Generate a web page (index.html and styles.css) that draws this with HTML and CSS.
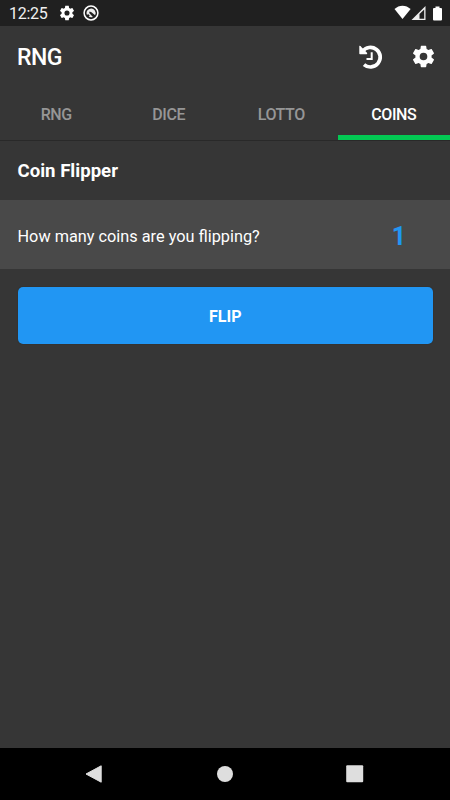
FILE: index.html
```html
<!DOCTYPE html>
<html lang="en">
<head>
<meta charset="utf-8">
<title>RNG</title>
<link rel="stylesheet" href="styles.css">
</head>
<body>
<svg class="defs" width="0" height="0" aria-hidden="true">
  <symbol id="gear" viewBox="0 0 24 24"><path fill="#fff" d="M19.14 12.94c.04-.3.06-.61.06-.94 0-.32-.02-.64-.07-.94l2.03-1.58c.18-.14.23-.41.12-.61l-1.92-3.32c-.12-.22-.37-.29-.59-.22l-2.39.96c-.5-.38-1.03-.7-1.62-.94l-.36-2.54c-.04-.24-.24-.41-.48-.41h-3.84c-.24 0-.43.17-.47.41l-.36 2.54c-.59.24-1.13.57-1.62.94l-2.39-.96c-.22-.08-.47 0-.59.22L2.74 8.87c-.12.21-.08.47.12.61l2.03 1.58c-.05.3-.09.63-.09.94s.02.64.07.94l-2.03 1.58c-.18.14-.23.41-.12.61l1.92 3.32c.12.22.37.29.59.22l2.39-.96c.5.38 1.03.7 1.62.94l.36 2.54c.05.24.24.41.48.41h3.84c.24 0 .44-.17.47-.41l.36-2.54c.59-.24 1.13-.56 1.62-.94l2.39.96c.22.08.47 0 .59-.22l1.92-3.32c.12-.22.07-.47-.12-.61l-2.01-1.58zM12 15.4A3.4 3.4 0 1 1 12 8.600a3.400 3.400 0 0 1 0 6.800z"/></symbol>
</svg>
<div class="status">
  <span class="clock">12:25</span>
  <svg class="status-gear" width="18" height="18"><use href="#gear"/></svg>
  <svg class="status-app" width="16" height="16" viewBox="0 0 16 16">
    <circle cx="8" cy="8" r="6.900" fill="none" stroke="#fff" stroke-width="1.500"/>
    <path d="M4 10A4.500 4.500 0 0 1 11.800 5.600a4.500 4.500 0 0 1 .3 4.700L8.500 7.200 6.600 6.400 6.200 8l3.700 3.900a4.500 4.500 0 0 1-4.300-.4l1.200-.8-1.700-1.600z" fill="#eee"/>
  </svg>
  <div class="signals">
    <svg width="46" height="16" viewBox="0 0 46 16">
      <path d="M.5 4C5-.5 12-.5 16.600 4L8.500 14z" fill="#fff"/>
      <path d="M31.500 1v14h-14z" fill="#eee"/>
      <path d="M30.200 4.400v9.300h-4.700V9.100z" fill="#202020"/>
    </svg>
    <svg class="battery" width="9" height="15" viewBox="0 0 9 15"><path d="M2.500.5h4V2H8q1 0 1 1v10.500q0 1-1 1H1q-1 0-1-1V3q0-1 1-1h1.500z" fill="#fff"/></svg>
  </div>
</div>
<header class="appbar">
  <h1>RNG</h1>
  <svg class="history" width="26" height="26" viewBox="0 0 26 26" fill="none" stroke="#fff">
    <path d="M5.500 7.400A9.800 9.800 0 1 1 7 20.600" stroke-width="3.700"/>
    <path d="M2.300 1.800q1.500 0 2 1.200l5.700 5.700q.8 1.600-.6 1.600H3q-.7 0-.7-.7z" fill="#fff" stroke="none"/>
    <path d="M14.700 8.200v6.900H9.500" stroke-width="2"/>
  </svg>
  <svg class="settings" width="27" height="27"><use href="#gear"/></svg>
</header>
<nav class="tabs">
  <span>RNG</span><span>DICE</span><span>LOTTO</span><span class="active">COINS</span>
</nav>
<main>
  <h2>Coin Flipper</h2>
  <div class="row"><span>How many coins are you flipping?</span><b>1</b></div>
  <button class="flip">FLIP</button>
</main>
<footer class="navbar">
  <svg width="20" height="20" viewBox="0 0 20 20"><path d="M17.200 1.800v16.400L2 10z" fill="#dedede" stroke="#dedede" stroke-linejoin="round"/></svg>
  <svg width="20" height="20" viewBox="0 0 20 20"><circle cx="10" cy="10" r="8" fill="#dedede"/></svg>
  <svg width="20" height="20" viewBox="0 0 20 20"><rect x="1.200" y="1.200" width="17" height="17" rx="1" fill="#dedede"/></svg>
</footer>
</body>
</html>
```
FILE: styles.css
```css
* { box-sizing: border-box; }
body {
  margin: 0;
  width: 450px;
  height: 800px;
  display: flex;
  flex-direction: column;
  overflow: hidden;
  background: #363636;
  color: #fff;
  font-family: Roboto, sans-serif;
}
svg { display: block; flex: none; }
.defs { position: absolute; }
.status {
  height: 26px;
  background: #202020;
  display: flex;
  align-items: center;
  padding: 0 8px 0 9px;
}
.clock { width: 49px; font-size: 16px; letter-spacing: -.3px; line-height: 26px; padding-top: 2px; color: #f0f0f0; }
.status-app { margin-left: 7.250px; }
.signals { display: flex; align-items: center; margin-left: auto; }
.battery { margin-left: -7px; }
.appbar {
  height: 64px;
  display: flex;
  align-items: center;
  padding: 0 13px 0 17px;
}
h1 { margin: 0 auto 0 0; font-size: 23px; letter-spacing: -.5px; font-weight: 500; line-height: 64px; }
.history { margin: 0 27px 3px 0; }
.settings { margin-bottom: 3px; }
.tabs {
  height: 51px;
  display: flex;
  border-bottom: 1px solid #292929;
}
.tabs span {
  flex: 1;
  text-align: center;
  font-size: 16px;
  letter-spacing: -.4px;
  font-weight: 500;
  line-height: 49px;
  color: #969696;
}
.tabs .active { color: #fff; border-bottom: 5px solid #03c853; }
main { flex: 1; }
h2 { margin: 0; padding-left: 17.500px; height: 59px; line-height: 61px; font-size: 18.600px; font-weight: 700; }
.row {
  height: 69px;
  padding: 0 45px 0 17.500px;
  background: #494949;
  display: flex;
  align-items: center;
  justify-content: space-between;
  font-size: 16.300px;
}
.row span { padding-top: 3px; }
.row b { color: #2196f3; font-size: 25px; padding-top: 4px; margin-right: -1px; }
.flip {
  display: block;
  width: 415.500px;
  height: 57.500px;
  margin: 17.500px 0 0 17.500px;
  padding: 2px 0 0;
  border: 0;
  border-radius: 5px;
  background: #2196f3;
  box-shadow: 0 0 1px #2a2015;
  color: #fff;
  font: 700 16px Roboto, sans-serif;
}
.navbar {
  height: 52px;
  background: #000;
  display: flex;
  align-items: center;
  justify-content: space-between;
  padding: 0 85px 0 84px;
}
```
